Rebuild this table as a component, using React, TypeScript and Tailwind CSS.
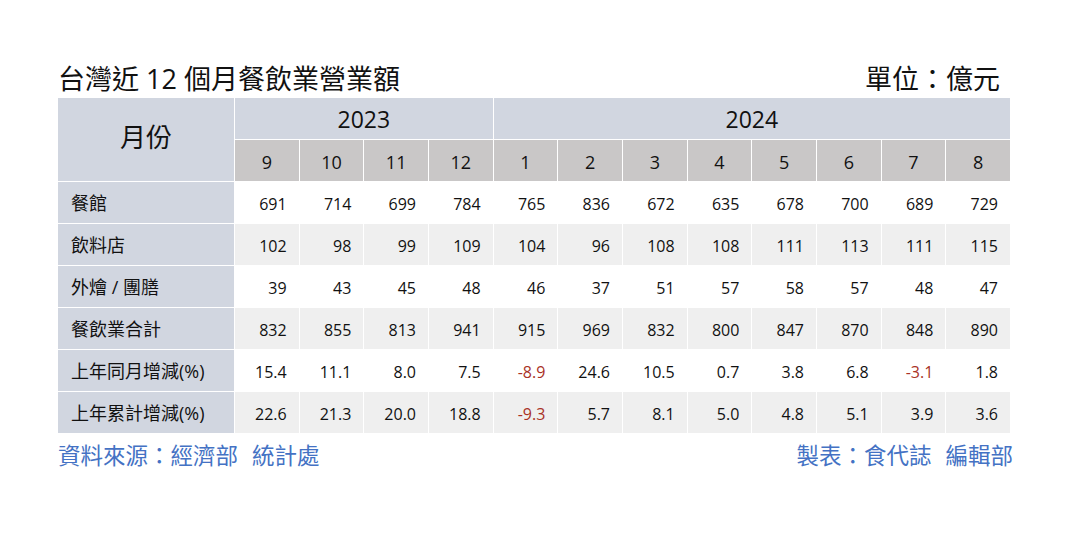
const months2023 = ["9", "10", "11", "12"];
const months2024 = ["1", "2", "3", "4", "5", "6", "7", "8"];

const rows: { label: string; values: string[] }[] = [
  { label: "餐館", values: ["691", "714", "699", "784", "765", "836", "672", "635", "678", "700", "689", "729"] },
  { label: "飲料店", values: ["102", "98", "99", "109", "104", "96", "108", "108", "111", "113", "111", "115"] },
  { label: "外燴 / 團膳", values: ["39", "43", "45", "48", "46", "37", "51", "57", "58", "57", "48", "47"] },
  { label: "餐飲業合計", values: ["832", "855", "813", "941", "915", "969", "832", "800", "847", "870", "848", "890"] },
  { label: "上年同月增減(%)", values: ["15.4", "11.1", "8.0", "7.5", "-8.9", "24.6", "10.5", "0.7", "3.8", "6.8", "-3.1", "1.8"] },
  { label: "上年累計增減(%)", values: ["22.6", "21.3", "20.0", "18.8", "-9.3", "5.7", "8.1", "5.0", "4.8", "5.1", "3.9", "3.6"] },
];

const font = { fontFamily: '"Open Sans", "Noto Sans CJK TC", sans-serif' };

export default function App() {
  return (
    <div
      className="h-[541px] w-[1076px] bg-white pl-[58px] pt-[60px] text-[#111]"
      style={font}
    >
      <div className="flex h-[36px] w-[952px] items-center justify-between pr-[10px] text-[27px] leading-none">
        <span>台灣近 12 個月餐飲業營業額</span>
        <span>單位：億元</span>
      </div>

      <div className="mt-[2px] grid w-[952px] grid-cols-[176px_repeat(12,minmax(0,1fr))] auto-rows-[41px] gap-px bg-white">
        <div className="row-span-2 flex items-center justify-center bg-[#d1d6e0] pb-[4px] text-[26px]">
          月份
        </div>
        <div className="col-span-4 flex items-center justify-center bg-[#d1d6e0] pt-[2px] text-[23px]">
          2023
        </div>
        <div className="col-span-8 flex items-center justify-center bg-[#d1d6e0] pt-[2px] text-[23px]">
          2024
        </div>
        {[...months2023, ...months2024].map((m, i) => (
          <div
            key={i}
            className="flex items-center justify-center bg-[#c9c7c7] pt-[3px] text-[18px]"
          >
            {m}
          </div>
        ))}

        {rows.map((row, r) => (
          <>
            <div
              key={`l${r}`}
              className="flex items-center bg-[#d1d6e0] pl-[13px] pt-[1px] text-[18px]"
            >
              {row.label}
            </div>
            {row.values.map((v, i) => (
              <div
                key={`${r}-${i}`}
                className={`flex items-center justify-end pr-[12px] pt-[2px] text-[16px] ${
                  r % 2 === 1 ? "bg-[#efefef]" : "bg-white"
                } ${v.startsWith("-") ? "text-[#a93226]" : ""}`}
              >
                {v}
              </div>
            ))}
          </>
        ))}
      </div>

      <div className="-mr-[3px] mt-[9px] flex h-[28px] w-[955px] items-center justify-between text-[22.5px] leading-none text-[#4472c4]">
        <span>
          資料來源：經濟部<span className="ml-[14px]">統計處</span>
        </span>
        <span>
          製表：食代誌<span className="ml-[14px]">編輯部</span>
        </span>
      </div>
    </div>
  );
}
